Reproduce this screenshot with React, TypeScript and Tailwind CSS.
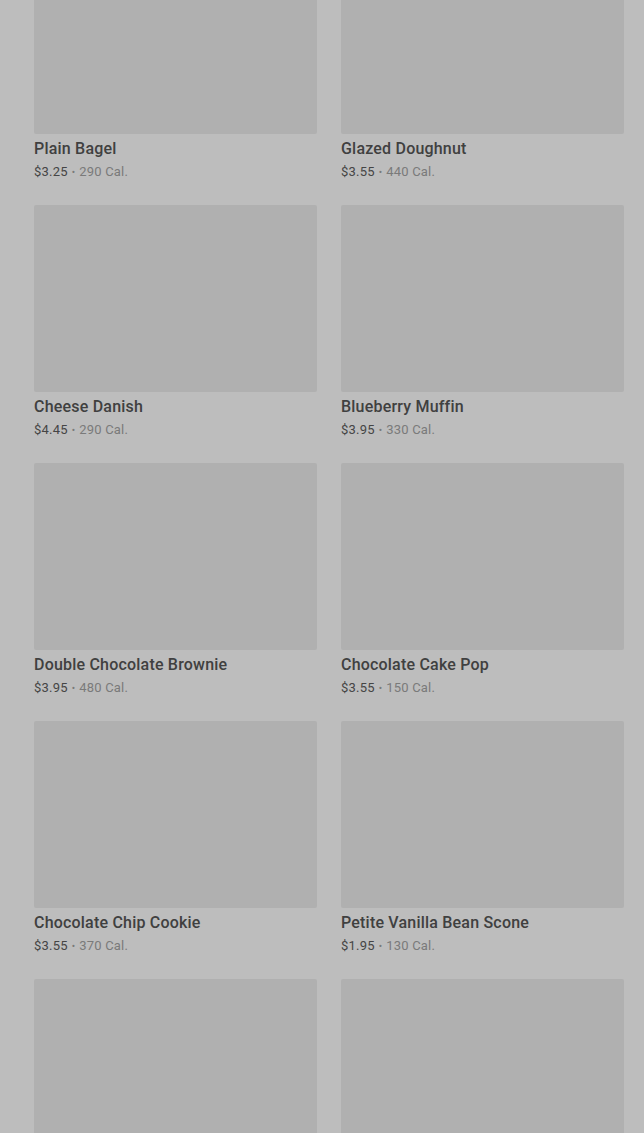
import React from "react";

type Item = { name: string; price: string; cal: string };

const items: Item[] = [
  { name: "Plain Bagel", price: "$3.25", cal: "290 Cal." },
  { name: "Glazed Doughnut", price: "$3.55", cal: "440 Cal." },
  { name: "Cheese Danish", price: "$4.45", cal: "290 Cal." },
  { name: "Blueberry Muffin", price: "$3.95", cal: "330 Cal." },
  { name: "Double Chocolate Brownie", price: "$3.95", cal: "480 Cal." },
  { name: "Chocolate Cake Pop", price: "$3.55", cal: "150 Cal." },
  { name: "Chocolate Chip Cookie", price: "$3.55", cal: "370 Cal." },
  { name: "Petite Vanilla Bean Scone", price: "$1.95", cal: "130 Cal." },
  { name: "", price: "", cal: "" },
  { name: "", price: "", cal: "" },
];

const ProductCard: React.FC<{ item: Item }> = ({ item }) => (
  <div className="flex flex-col h-[235px]">
    <div className="h-[187px] shrink-0 bg-[#b0b0b0] rounded-[2px]" />
    {item.name && (
      <div className="pt-[5px]">
        <h3 className="text-[16px] leading-[20px] font-medium text-[#404040] tracking-[0.2px]">
          {item.name}
        </h3>
        <p className="flex items-center h-[20px] mt-[3px] text-[13px] text-[#454545] tracking-[0.2px]">
          <span>{item.price}</span>
          <span className="text-[#7a7a7a] text-[10px] mx-[4px]">•</span>
          <span className="text-[#7a7a7a]">{item.cal}</span>
        </p>
      </div>
    )}
  </div>
);

export default function App() {
  return (
    <div
      className="h-[1133px] overflow-hidden bg-[#bdbdbd]"
      style={{ fontFamily: "Roboto, 'Liberation Sans', sans-serif" }}
    >
      <div className="grid grid-cols-2 gap-x-[24px] gap-y-[23px] pl-[34px] pr-[20px] mt-[-53px]">
        {items.map((item, i) => (
          <ProductCard key={i} item={item} />
        ))}
      </div>
    </div>
  );
}
